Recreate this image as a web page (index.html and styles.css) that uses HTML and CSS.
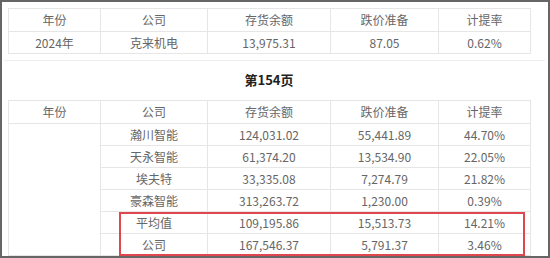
FILE: index.html
```html
<!DOCTYPE html>
<html lang="zh-CN">
<head>
    <meta charset="utf-8">
    <title>存货跌价准备对比</title>
    <link rel="stylesheet" href="styles.css">
</head>
<body>
    <div class="frame">
        <table class="data">
            <colgroup>
                <col class="c1"><col class="c2"><col class="c3"><col class="c4"><col class="c5">
            </colgroup>
            <tr><td>年份</td><td>公司</td><td>存货余额</td><td>跌价准备</td><td>计提率</td></tr>
            <tr><td>2024年</td><td>克来机电</td><td>13,975.31</td><td>87.05</td><td>0.62%</td></tr>
        </table>

        <div class="divider"></div>
        <p class="page-title">第154页</p>

        <table class="data">
            <colgroup>
                <col class="c1"><col class="c2"><col class="c3"><col class="c4"><col class="c5">
            </colgroup>
            <tr><td>年份</td><td>公司</td><td>存货余额</td><td>跌价准备</td><td>计提率</td></tr>
            <tr><td rowspan="6"></td><td>瀚川智能</td><td>124,031.02</td><td>55,441.89</td><td>44.70%</td></tr>
            <tr><td>天永智能</td><td>61,374.20</td><td>13,534.90</td><td>22.05%</td></tr>
            <tr><td>埃夫特</td><td>33,335.08</td><td>7,274.79</td><td>21.82%</td></tr>
            <tr><td>豪森智能</td><td>313,263.72</td><td>1,230.00</td><td>0.39%</td></tr>
            <tr><td>平均值</td><td>109,195.86</td><td>15,513.73</td><td>14.21%</td></tr>
            <tr><td>公司</td><td>167,546.37</td><td>5,791.37</td><td>3.46%</td></tr>
        </table>

        <div class="highlight"></div>
    </div>
</body>
</html>
```

FILE: styles.css
```css
:root {
    --text-color: #666;
    --border-color: #e6e6e6;
    --frame-color: #666;
    --mark-color: #e0464d;
}

* {
    margin: 0;
    padding: 0;
    box-sizing: border-box;
}

body {
    font-family: "Segoe UI", "Noto Sans CJK SC", sans-serif;
    color: var(--text-color);
    background-color: #fff;
}

.frame {
    position: relative;
    width: 550px;
    height: 258px;
    border: 2px solid var(--frame-color);
    padding: 6px 0 0 6px;
    overflow: hidden;
}

.data {
    width: 522px;
    border-collapse: collapse;
    table-layout: fixed;
    font-size: 12px;
}

.c1 { width: 92px; }
.c2 { width: 107px; }
.c3 { width: 123px; }
.c4 { width: 108px; }
.c5 { width: 92px; }

.data td {
    height: 22px;
    border: 1px solid var(--border-color);
    text-align: center;
    vertical-align: middle;
    line-height: 20px;
}

.data tr:first-child td {
    height: 23px;
}

.divider {
    height: 1px;
    margin: 6px 3px 0 -4px;
    background-color: #eee;
}

.page-title {
    width: 522px;
    margin: 10px 0 11px;
    text-align: center;
    font-size: 13px;
    font-weight: bold;
    line-height: 18px;
    color: #222;
}

.highlight {
    position: absolute;
    left: 117px;
    top: 210px;
    width: 406px;
    height: 44px;
    border: 2px solid var(--mark-color);
}
```
